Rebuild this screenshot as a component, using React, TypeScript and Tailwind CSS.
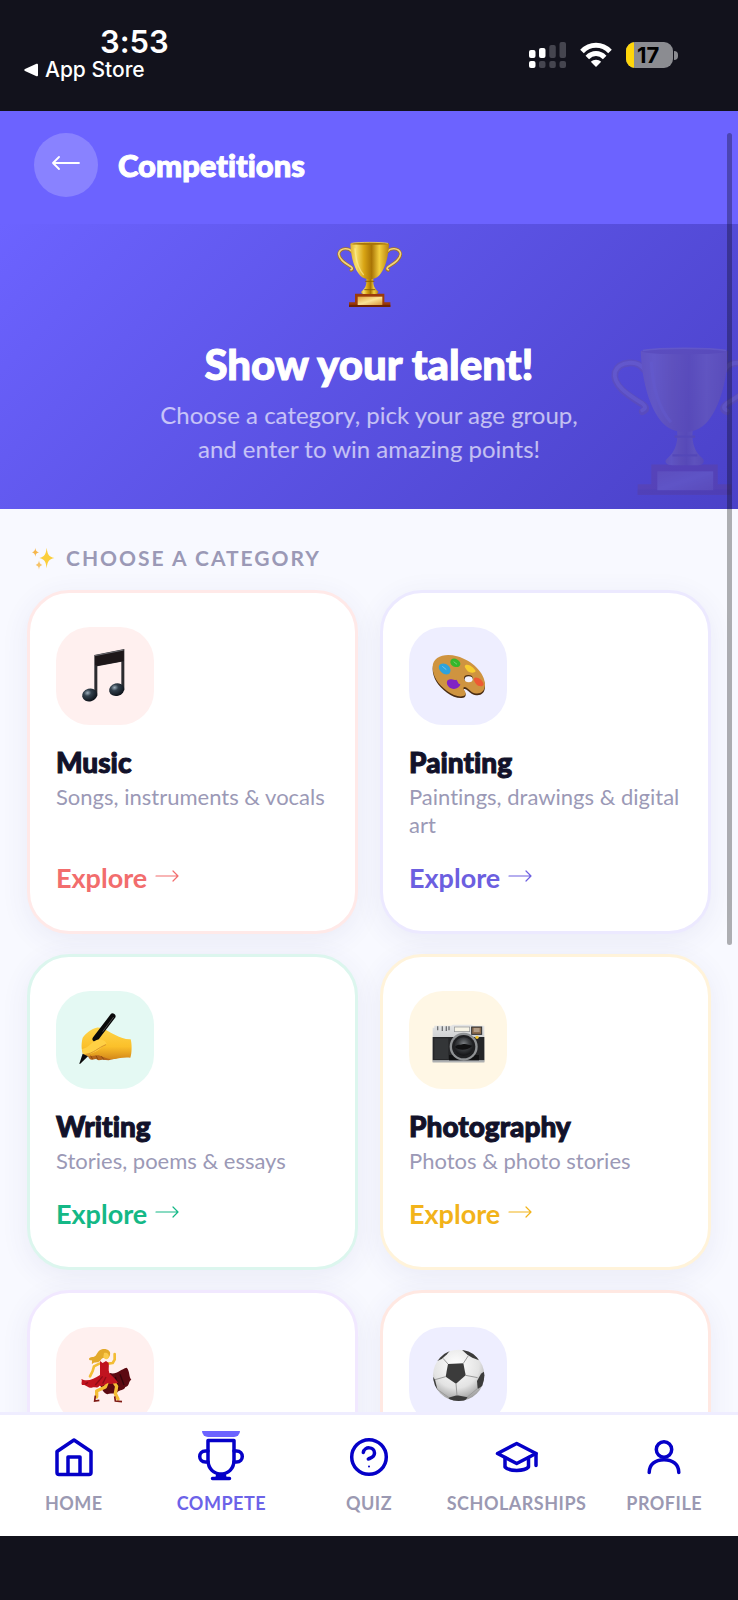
import React from "react";
import { clsx } from "clsx";

const TrophyArt = ({ className }: { className?: string }) => (
  <svg viewBox="18 19 204 204" className={className} aria-hidden="true">
    <defs>
      <linearGradient id="gold" x1="0" x2="1" y1="0" y2="0">
        <stop offset="0" stopColor="#e0b02c" />
        <stop offset="0.15" stopColor="#f7df6b" />
        <stop offset="0.35" stopColor="#d9a514" />
        <stop offset="0.55" stopColor="#a97405" />
        <stop offset="0.75" stopColor="#f3cf3e" />
        <stop offset="1" stopColor="#b98310" />
      </linearGradient>
      <linearGradient id="plate" x1="0" x2="1" y1="0" y2="1">
        <stop offset="0" stopColor="#e2a33c" />
        <stop offset="0.5" stopColor="#fbe396" />
        <stop offset="1" stopColor="#d9983a" />
      </linearGradient>
    </defs>
    <g fill="none" strokeLinecap="round">
      <path d="M68 54C60 42 36 42 30 58C26 76 50 90 66 100C72 104 72 108 66 110" stroke="#a8751a" strokeWidth="9" />
      <path d="M68 53C60 42 36 42 30 57C26 75 50 89 66 99C71 103 71 106 66 108" stroke="#f0d481" strokeWidth="5" />
      <path d="M176 54C184 42 208 42 214 58C218 76 194 90 178 100C172 104 172 108 178 110" stroke="#a8751a" strokeWidth="9" />
      <path d="M176 53C184 42 208 42 214 57C218 75 194 89 178 99C173 103 173 106 178 108" stroke="#f0d481" strokeWidth="5" />
    </g>
    <path d="M78 180H166V206H184V220H60V206H78Z" fill="#9c3a0a" />
    <path d="M60 213H184V220H60Z" fill="#6e2203" />
    <rect x="86" y="189" width="74" height="25" fill="url(#plate)" />
    <path d="M111 126H134C130 148 134 162 146 172C150 176 146 181 140 181H106C98 181 94 176 99 172C111 162 115 148 111 126Z" fill="url(#gold)" />
    <path d="M109 143H136M106 168H139" stroke="#8f6205" strokeWidth="3" />
    <path d="M64 30C70 24 174 24 180 30C178 84 160 126 138 134C128 138 116 138 106 134C84 126 66 84 64 30Z" fill="url(#gold)" />
    <ellipse cx="122" cy="30" rx="57" ry="4" fill="#a87508" />
    <path d="M67 29C90 25 154 25 177 29" fill="none" stroke="#f8dd74" strokeWidth="2" />
    <path d="M78 44C80 80 90 108 104 124" fill="none" stroke="#fff0a0" strokeWidth="4" opacity="0.6" />
  </svg>
);

const MusicArt = () => (
  <svg viewBox="0 0 162 162" className="size-[54px]" aria-hidden="true">
    <defs>
      <radialGradient id="note" cx="0.4" cy="0.3" r="0.7">
        <stop offset="0" stopColor="#9fb0bd" />
        <stop offset="0.35" stopColor="#32404c" />
        <stop offset="1" stopColor="#0c1118" />
      </radialGradient>
    </defs>
    <path d="M49 18L139 0V124H130V38L58 52V140H49Z" fill="#2b2b2f" />
    <path d="M51 20L137 3V36L58 50L51 48Z" fill="#1d1719" />
    <path d="M51 20L137 3" stroke="#6d6d72" strokeWidth="3" />
    <ellipse cx="35" cy="138" rx="23" ry="19" fill="url(#note)" transform="rotate(-14 35 138)" />
    <ellipse cx="116" cy="122" rx="23" ry="19" fill="url(#note)" transform="rotate(-14 116 122)" />
  </svg>
);

const PaletteArt = () => (
  <svg viewBox="0 0 162 162" className="size-[54px]" aria-hidden="true">
    <path d="M5 60C5 28 40 16 76 26C122 38 162 78 162 112C162 140 140 144 122 134C112 127 104 116 98 121C100 128 108 136 102 143C92 152 68 146 48 131C20 110 5 86 5 60Z" fill="#4a2c12" />
    <path d="M5 55C5 22 42 12 78 22C124 34 162 74 162 106C162 134 140 139 122 129C112 122 104 110 97 116C98 124 108 131 102 138C92 147 68 141 48 126C20 105 5 82 5 55Z" fill="#cf9440" />
    <ellipse cx="112" cy="88" rx="13" ry="10" fill="#4a2c12" />
    <ellipse cx="113" cy="91" rx="12" ry="9" fill="#f4f3ff" />
    <path d="M24 50C30 40 44 42 52 50C62 58 60 74 50 76C36 78 20 62 24 50Z" fill="#2fa3dd" />
    <path d="M60 32C68 24 80 30 86 38C92 48 84 56 74 54C62 52 54 42 60 32Z" fill="#35b72b" />
    <path d="M104 48C112 44 128 54 134 66C132 74 112 72 108 64C104 58 98 52 104 48Z" fill="#f8cd2f" />
    <path d="M132 86C142 84 156 94 158 106C156 116 140 112 136 106C132 100 124 90 132 86Z" fill="#ee5a33" />
    <path d="M50 94C60 86 68 96 76 92C82 98 80 104 88 106C86 116 72 124 60 118C50 114 44 102 50 94Z" fill="#8124c4" />
    <path d="M34 52L46 62M68 38L78 46" stroke="#ffffff" strokeWidth="3" opacity="0.35" />
  </svg>
);

const WritingArt = () => (
  <svg viewBox="0 0 162 162" className="size-[54px]" aria-hidden="true">
    <defs>
      <linearGradient id="skin" x1="0" x2="0" y1="0" y2="1">
        <stop offset="0" stopColor="#ffd54a" />
        <stop offset="0.6" stopColor="#fbc02a" />
        <stop offset="1" stopColor="#d4881a" />
      </linearGradient>
    </defs>
    <path d="M24 118C30 130 34 142 42 140L54 138L62 142L74 140L92 142L120 134L110 108Z" fill="#b5651a" />
    <path d="M14 74C24 60 42 46 56 44C74 42 90 56 112 66C128 74 142 80 158 79C162 94 162 120 157 134C138 132 124 136 104 139C88 140 78 132 62 127C50 126 38 132 22 128C10 122 8 96 14 74Z" fill="url(#skin)" />
    <path d="M104 10L52 78" stroke="#0a0a0a" strokeWidth="17" strokeLinecap="round" />
    <path d="M107 12L74 56" stroke="#4a4a4a" strokeWidth="3" />
    <path d="M12 108C28 106 38 92 50 84C64 76 80 80 86 92C74 98 64 112 46 119C34 124 20 126 14 122Z" fill="#ffd044" />
    <path d="M22 124C46 122 60 104 84 95" fill="none" stroke="#d9942a" strokeWidth="3" />
    <path d="M38 128L44 139M54 128L60 140M70 130L78 140" stroke="#8c4a10" strokeWidth="3" />
    <path d="M14 122L30 130L6 153L4 152Z" fill="#0a0a0a" />
  </svg>
);

const CameraArt = () => (
  <svg viewBox="0 0 162 162" className="size-[54px]" aria-hidden="true">
    <defs>
      <linearGradient id="silver" x1="0" x2="0" y1="0" y2="1">
        <stop offset="0" stopColor="#e4e5e5" />
        <stop offset="1" stopColor="#a9abad" />
      </linearGradient>
      <radialGradient id="lens" cx="0.5" cy="0.35" r="0.6">
        <stop offset="0" stopColor="#7c8084" />
        <stop offset="0.5" stopColor="#3b3e41" />
        <stop offset="1" stopColor="#17181a" />
      </radialGradient>
    </defs>
    <path d="M5 44H10V38H60L66 35H122L128 38H160V148H5Z" fill="url(#silver)" />
    <rect x="5" y="72" width="155" height="70" fill="#252628" />
    <rect x="10" y="76" width="42" height="62" fill="#333537" />
    <rect x="5" y="142" width="155" height="6" fill="#aeb0b2" />
    <path d="M20 40V52M34 40V54M46 40V54M54 40V52" stroke="#6f7173" strokeWidth="4" />
    <rect x="70" y="42" width="46" height="14" fill="#f7f3e4" stroke="#8e9092" strokeWidth="2" />
    <rect x="122" y="42" width="30" height="22" fill="#8a6b4e" stroke="#2e2f30" strokeWidth="3" />
    <path d="M128 48H146M128 54H146" stroke="#d8cbb9" strokeWidth="3" />
    <rect x="54" y="126" width="90" height="16" fill="#101112" />
    <circle cx="98" cy="101" r="42" fill="#8f9294" />
    <circle cx="98" cy="101" r="35" fill="#1f2022" />
    <circle cx="98" cy="101" r="28" fill="url(#lens)" />
    <path d="M72 102C80 92 88 98 94 94C104 90 112 96 124 98C112 112 84 114 72 102Z" fill="#101112" />
    <circle cx="138" cy="73" r="5" fill="#f2c52e" />
  </svg>
);

const DancerArt = () => (
  <svg viewBox="0 0 162 162" className="size-[54px]" aria-hidden="true">
    <path d="M96 72C116 78 128 60 146 56C156 66 152 84 160 92C150 98 156 110 142 114C138 126 126 120 118 130C108 138 98 130 88 136C78 134 70 120 66 106Z" fill="#5c0911" />
    <path d="M112 84L122 118M126 76L138 108" stroke="#34040a" strokeWidth="4" />
    <g fill="none" stroke="#f3bd35" strokeLinecap="round" strokeLinejoin="round">
      <path d="M64 44L48 52L44 66L36 82" strokeWidth="8" />
      <path d="M90 44L104 42L110 32L110 15" strokeWidth="8" />
      <path d="M90 94L82 114L56 126L56 144" strokeWidth="10" />
      <path d="M104 94L116 112L112 134L120 150" strokeWidth="10" />
    </g>
    <path d="M52 140L50 156L64 154M110 142L112 156L132 158" stroke="#7f1a14" strokeWidth="5" fill="none" />
    <path d="M66 36L74 42L84 36L92 42C94 54 90 62 94 72C104 84 116 92 120 102C106 102 98 108 90 102C80 106 74 114 64 110C58 120 50 112 42 116C30 118 26 106 12 108C8 102 14 96 10 90C26 100 48 90 66 78Z" fill="#c0131f" />
    <path d="M74 82L52 108M84 84L74 104M30 100L22 106" stroke="#8f0b17" strokeWidth="4" />
    <path d="M58 12C66 -4 90 -4 96 10C98 20 92 30 84 28C76 24 72 28 66 36C56 44 50 36 42 46C40 38 46 34 38 34C28 32 34 22 46 24C54 22 54 18 58 12Z" fill="#e3a92a" />
    <path d="M78 12C88 10 94 16 92 26C86 34 78 30 76 24Z" fill="#fbcb4b" />
  </svg>
);

const SoccerArt = () => (
  <svg viewBox="0 0 162 162" className="size-[54px]" aria-hidden="true">
    <defs>
      <radialGradient id="ball" cx="0.45" cy="0.3" r="0.75">
        <stop offset="0" stopColor="#ffffff" />
        <stop offset="0.6" stopColor="#e3e3e3" />
        <stop offset="1" stopColor="#8f8f8f" />
      </radialGradient>
      <clipPath id="ballEdge">
        <circle cx="83" cy="79" r="77" />
      </clipPath>
    </defs>
    <circle cx="83" cy="79" r="77" fill="url(#ball)" />
    <g clipPath="url(#ballEdge)">
      <g fill="#3b3b3b">
        <path d="M51 45L97 43L104 79L75 104L44 83Z" />
        <path d="M14 38C22 22 36 10 56 6L48 16L32 30Z" />
        <path d="M90 0C118 2 134 14 144 34L124 26L110 18Z" />
        <path d="M162 66L150 74L138 96L140 120L162 106Z" />
        <path d="M4 80L12 92L20 124L4 104Z" />
        <path d="M52 146L78 139L110 145L98 160H62Z" />
      </g>
      <path d="M51 45L36 28M97 43L112 20M104 79L140 86M75 104L78 140M44 83L12 92M20 122L54 146M108 145L140 118" stroke="#9a9a9a" strokeWidth="3" fill="none" />
    </g>
  </svg>
);

const SparklesArt = () => (
  <svg viewBox="0 0 66 66" className="size-[22px] overflow-visible" aria-hidden="true">
    <path d="M44 2C47 24 50 28 67 33C50 38 47 42 44 64C41 42 38 38 22 33C38 28 41 24 44 2Z" fill="#fbcf3c" />
    <path d="M10 2C11 11 13 13 21 16C13 19 11 21 10 29C9 21 7 19 0 16C7 13 9 11 10 2Z" fill="#f6b64b" />
    <path d="M21 40C22 49 24 51 31 54C24 57 22 59 21 68C20 59 18 57 11 54C18 51 20 49 21 40Z" fill="#f6c368" />
  </svg>
);

const ExploreArrow = () => (
  <svg viewBox="0 0 24 14" className="mb-1 w-6 h-[14px]" fill="none" stroke="currentColor" strokeWidth="1.2" strokeLinecap="round" strokeLinejoin="round" aria-hidden="true">
    <path d="M1 7H23M18 2L23 7L18 12" />
  </svg>
);

interface Category {
  art: React.ReactNode;
  title?: string;
  description?: string;
  border: string;
  tile: string;
  accent: string;
}

const categories: Category[] = [{
  art: <MusicArt />,
  title: "Music",
  description: "Songs, instruments & vocals",
  border: "border-[#ffe9e8]",
  tile: "bg-[#fff0ef]",
  accent: "text-[#f26d6d]"
}, {
  art: <PaletteArt />,
  title: "Painting",
  description: "Paintings, drawings & digital art",
  border: "border-[#ece9ff]",
  tile: "bg-[#eeeeff]",
  accent: "text-[#6c5fe0]"
}, {
  art: <WritingArt />,
  title: "Writing",
  description: "Stories, poems & essays",
  border: "border-[#dcf6ee]",
  tile: "bg-[#e4f9f3]",
  accent: "text-[#14b886]"
}, {
  art: <CameraArt />,
  title: "Photography",
  description: "Photos & photo stories",
  border: "border-[#fff3da]",
  tile: "bg-[#fff7e5]",
  accent: "text-[#f2b31a]"
}, {
  art: <DancerArt />,
  border: "border-[#f1e8ff]",
  tile: "bg-[#fff0ef]",
  accent: "text-[#a855f7]"
}, {
  art: <SoccerArt />,
  border: "border-[#ffe8e2]",
  tile: "bg-[#eeeeff]",
  accent: "text-[#fb7185]"
}];

const CategoryCard = ({ art, title, description, border, tile, accent }: Category) => (
  <article className={clsx("flex flex-col items-start rounded-[42px] border-[3px] bg-white px-[26px] pt-[34px] pb-9 shadow-[0_6px_28px_rgba(70,70,140,0.08)]", border)}>
    <div className={clsx("flex size-[98px] items-center justify-center rounded-[34px]", tile)}>{art}</div>
    {title && (
      <>
        <h3 className="mt-5 text-[28px] leading-[34px] font-black text-[#12122a] [-webkit-text-stroke:1px_#12122a]">{title}</h3>
        <p className="mt-1 mb-[22px] flex-1 text-[22px] leading-7 text-[#9b99b6]">{description}</p>
        <a href="#" className={clsx("flex items-center gap-2 text-[27px] leading-[34px] font-bold", accent)}>
          Explore
          <ExploreArrow />
        </a>
      </>
    )}
  </article>
);

const navItems = [{
  label: "HOME",
  icon: (
    <>
      <path d="M24 7L41 18.5V39.5Q41 41.5 39 41.5H9Q7 41.5 7 39.5V18.5Z" />
      <path d="M18 41V24H30V41" />
    </>
  )
}, {
  label: "COMPETE",
  active: true,
  icon: (
    <>
      <path d="M11 7.500H37V27C37 36 31 41 24 41C17 41 11 36 11 27Z" />
      <path d="M11 18H8.500C0.800 18 0.800 29 8.500 29H11M37 18H39.500C47.200 18 47.200 29 39.500 29H37" />
      <path d="M21 41L20 45M27 41L28 45M15.500 45.500H32.500" />
      <path d="M21 43H27" />
    </>
  )
}, {
  label: "QUIZ",
  icon: (
    <>
      <circle cx="24" cy="24" r="17.3" />
      <path d="M18.300 19.500C19.500 13 29.500 13.500 29.500 20C29.500 24.500 25.500 25 23.300 26" />
      <circle cx="24" cy="33.500" r="1" fill="currentColor" stroke="none" />
    </>
  )
}, {
  label: "SCHOLARSHIPS",
  icon: (
    <>
      <path d="M4.500 20.500L23.700 10.500L43 20.500L23.700 30.500Z" />
      <path d="M43 20.500V32.500M12 24.500V34C16 38.500 31.500 38.500 35.500 34V24.500" />
    </>
  )
}, {
  label: "PROFILE",
  icon: (
    <>
      <circle cx="24" cy="16.500" r="7.700" />
      <path d="M9.200 39.500C9.200 31.500 15 26.700 24 26.700C33 26.700 38.800 31.500 38.800 39.500" />
    </>
  )
}];

const StatusBar = () => (
  <div className="flex h-[111px] shrink-0 items-start justify-between bg-[#12121c] pr-[60px] pl-6 text-white font-[Inter,sans-serif]">
    <div className="pt-[25px]">
      <div className="pl-[76px] text-[31px] leading-[33px] font-semibold">3:53</div>
      <a href="#" className="flex items-center gap-[7px] text-[21px] leading-6 font-medium">
        <svg viewBox="0 0 14 14" className="size-[14px]" fill="currentColor" aria-hidden="true">
          <path d="M12.500 0.800Q14 0.200 14 2V12Q14 13.800 12.500 13.200L1 8Q-0.500 7 1 6Z" />
        </svg>
        App Store
      </a>
    </div>
    <div className="flex items-center gap-[14px] pt-[42px]">
      <svg viewBox="0 0 37 26" className="w-[37px] h-[26px]" fill="#45454f" aria-hidden="true">
        <rect y="8" width="6.500" height="8" rx="2" fill="#fff" />
        <rect x="10" y="6" width="6.500" height="10" rx="2" fill="#fff" />
        <rect x="20.300" y="3" width="6.500" height="13" rx="2" />
        <rect x="30.500" width="6.500" height="16" rx="2" />
        <rect y="19" width="6.500" height="7" rx="2" fill="#fff" />
        <rect x="10" y="19" width="6.500" height="7" rx="2" />
        <rect x="20.300" y="19" width="6.500" height="7" rx="2" />
        <rect x="30.500" y="19" width="6.500" height="7" rx="2" />
      </svg>
      <svg viewBox="0 0 32 26" className="w-8 h-[26px]" fill="none" stroke="#fff" strokeWidth="5" aria-hidden="true">
        <path d="M2 9.500C10 1.300 22 1.300 30 9.500" />
        <path d="M7.300 15.500C12.500 10.300 19.500 10.300 24.700 15.500" />
        <path d="M16 25L10.800 19.800C13.500 17 18.500 17 21.200 19.800Z" fill="#fff" stroke="none" />
      </svg>
      <div className="flex items-center gap-px">
        <div className="flex h-[26px] w-[47px] overflow-hidden rounded-[9px] bg-[#8b8c91]">
          <div className="w-2 bg-[#ffd60a]" />
          <span className="pl-[3px] text-[22px] leading-[26px] font-bold text-black">17</span>
        </div>
        <div className="h-[9px] w-1 rounded-r-full bg-[#8b8c91]" />
      </div>
    </div>
  </div>
);

const App = () => {
  return (
    <div className="flex h-screen flex-col overflow-hidden bg-[#12121c] font-[Lato,sans-serif] [font-variant-ligatures:none]">
      <StatusBar />

      <div className="relative flex min-h-0 flex-1 flex-col bg-[#f8f9ff]">
        <header className="flex shrink-0 items-center gap-5 bg-[#6c63ff] px-[34px] pt-[22px] pb-[27px]">
          <button type="button" aria-label="Back" className="flex size-16 items-center justify-center rounded-full bg-white/20 text-white">
            <svg viewBox="0 0 28 16" className="mb-1 w-7 h-4" fill="none" stroke="currentColor" strokeWidth="1.800" strokeLinecap="round" strokeLinejoin="round" aria-hidden="true">
              <path d="M27 8H1M7 2L1 8L7 14" />
            </svg>
          </button>
          <h1 className="text-[31px] leading-10 font-black text-white [-webkit-text-stroke:1px_#ffffff]">Competitions</h1>
        </header>

        <main className="min-h-0 flex-1 overflow-y-auto [scrollbar-width:none]">
          <section className="relative flex flex-col items-center overflow-hidden bg-linear-135 from-[#6c63ff] to-[#4a41c8] px-8 pt-4 pb-10 text-center">
            <TrophyArt className="size-[68px]" />
            <h2 className="mt-8 text-[42px] leading-[48px] font-black text-white [-webkit-text-stroke:1px_#ffffff]">Show your talent!</h2>
            <p className="mt-[10px] mb-[3px] max-w-[440px] text-2xl leading-[34px] text-white/65">
              Choose a category, pick your age group, and enter to win amazing points!
            </p>
            <TrophyArt className="absolute -right-[22px] bottom-3 size-[154px] opacity-10" />
          </section>

          <section className="px-[27px] pt-8 pb-8">
            <h2 className="flex items-center gap-3 px-[5px] text-[21px] leading-[34px] font-bold tracking-[2px] text-[#9b99b6] uppercase">
              <SparklesArt />
              Choose a category
            </h2>
            <div className="mt-[15px] grid grid-cols-2 gap-x-[22px] gap-y-5">
              {categories.map((category, index) => (
                <CategoryCard key={index} {...category} />
              ))}
            </div>
          </section>
        </main>

        <nav className="grid shrink-0 grid-cols-5 border-t-[3px] border-[#efedff] bg-white pt-[18px] pb-[18px]">
          {navItems.map((item) => (
            <a
              key={item.label}
              href="#"
              className={clsx("relative flex flex-col items-center gap-2 text-lg leading-[29px] font-bold tracking-[0.5px]", item.active ? "text-[#6c63e8]" : "text-[#9b99b2]")}
            >
              {item.active && <span className="absolute -top-[2px] h-[6px] w-[38px] rounded-b-full bg-[#6c63ff]" />}
              <svg viewBox="0 0 48 48" className="size-12 overflow-visible text-[#0500c8]" fill="none" stroke="currentColor" strokeWidth="3.500" strokeLinecap="round" strokeLinejoin="round" aria-hidden="true">
                {item.icon}
              </svg>
              {item.label}
            </a>
          ))}
        </nav>

        <div className="absolute top-[22px] right-[6px] h-[57%] w-[5px] rounded-full bg-black/30" />
      </div>

      <div className="h-16 shrink-0" />
    </div>
  );
};

export default App;
